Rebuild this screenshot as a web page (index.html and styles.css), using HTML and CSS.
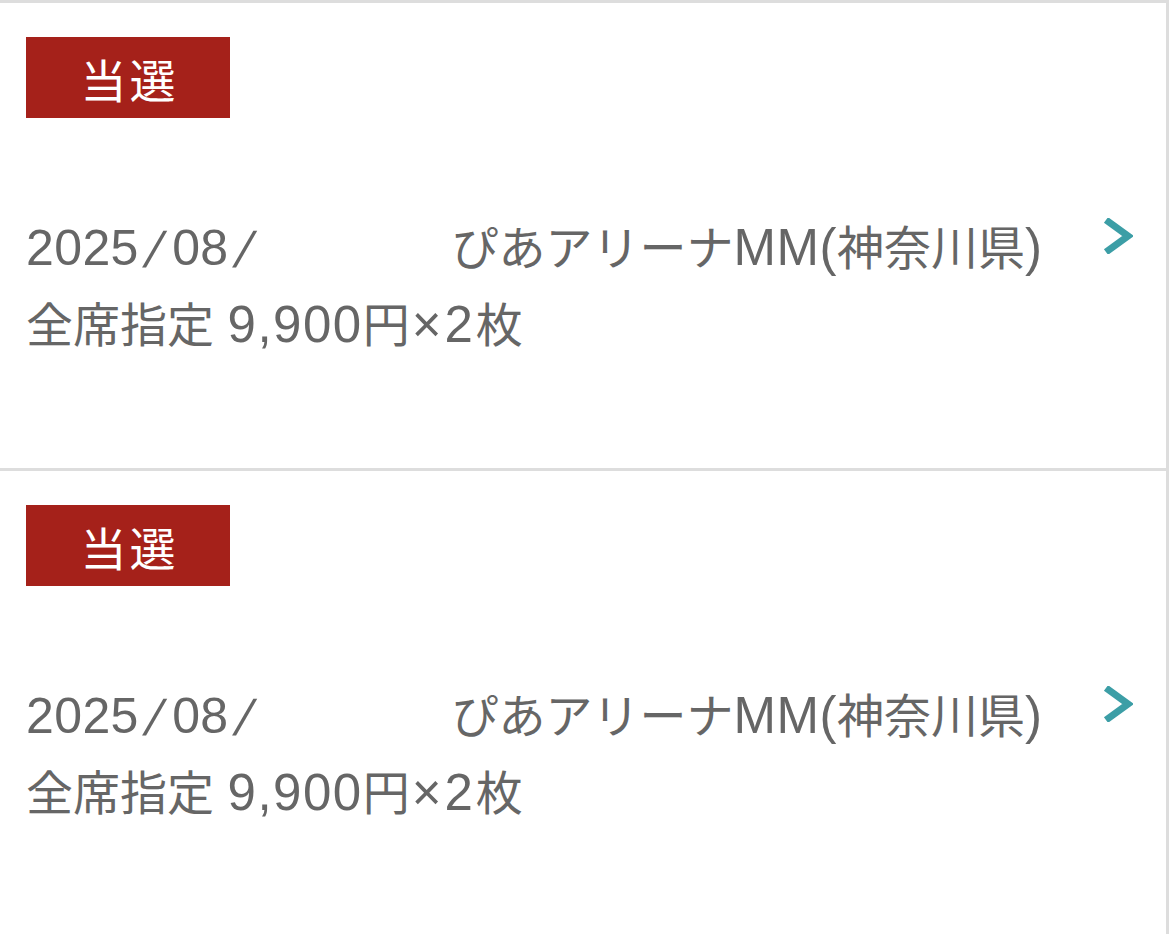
FILE: index.html
```html
<!DOCTYPE html>
<html lang="ja">
<head>
  <meta charset="UTF-8">
  <meta name="viewport" content="width=device-width, initial-scale=1.0">
  <title>抽選結果</title>
  <link rel="stylesheet" href="styles.css">
</head>
<body>
  <div class="result-list">

    <div class="result-item">
      <div class="badge">当選</div>
      <div class="detail">
        <div class="detail-text">
          <div class="line">
            <span class="date lat">2025<span class="sep">/</span>08<span class="sep">/</span></span>
            <span class="venue">ぴあアリーナ<span class="lat">MM(</span>神奈川県<span class="lat">)</span></span>
          </div>
          <div class="line">全席指定 <span class="lat price">9,900</span>円<span class="lat times">×</span><span class="lat count">2</span>枚</div>
        </div>
        <svg class="chevron" viewBox="0 0 30 36" width="30" height="36">
          <polyline points="3,2 25,18 3,34" />
        </svg>
      </div>
    </div>

    <div class="result-item">
      <div class="badge">当選</div>
      <div class="detail">
        <div class="detail-text">
          <div class="line">
            <span class="date lat">2025<span class="sep">/</span>08<span class="sep">/</span></span>
            <span class="venue">ぴあアリーナ<span class="lat">MM(</span>神奈川県<span class="lat">)</span></span>
          </div>
          <div class="line">全席指定 <span class="lat price">9,900</span>円<span class="lat times">×</span><span class="lat count">2</span>枚</div>
        </div>
        <svg class="chevron" viewBox="0 0 30 36" width="30" height="36">
          <polyline points="3,2 25,18 3,34" />
        </svg>
      </div>
    </div>

  </div>
</body>
</html>
```

FILE: styles.css
```css
/* Base */
body {
  margin: 0;
  padding: 0;
  background-color: #fff;
  font-family: "Liberation Sans", "Noto Sans CJK JP", sans-serif;
  color: #666;
}

/* List wrapper */
.result-list {
  border-top: 3px solid #ddd;
  border-right: 3px solid #ddd;
}

/* One result card */
.result-item {
  min-height: 468px;
  box-sizing: border-box;
  padding: 34px 33px 0 26px;
  border-bottom: 3px solid #ddd;
}

.badge {
  width: 204px;
  height: 81px;
  display: flex;
  justify-content: center;
  align-items: center;
  background-color: #a5211a;
  color: #fff;
  font-family: "Noto Sans CJK JP", sans-serif;
  font-size: 46px;
  letter-spacing: 3px;
  text-indent: 3px;
}

/* Date, venue and seat info */
.detail {
  display: flex;
  align-items: flex-start;
  margin-top: 90px;
}

.detail-text {
  flex: 1;
}

.line {
  font-family: "Noto Sans CJK JP", sans-serif;
  font-size: 47px;
  line-height: 74px;
  white-space: nowrap;
}

.lat {
  font-family: "Liberation Sans", sans-serif;
  font-size: 51px;
  letter-spacing: 0.5px;
}

.date {
  display: inline-block;
  width: 415px;
  font-size: 50px;
  letter-spacing: 0.4px;
}

/* slanted, wide date separator */
.sep {
  display: inline-block;
  margin: 0 10px 0 9px;
  transform: skewX(-17deg) translateY(2px);
}

.price {
  margin-left: 3px;
  letter-spacing: 1.5px;
}

.times {
  margin-left: 2px;
  letter-spacing: 3px;
}

.count {
  letter-spacing: 3px;
}

.chevron {
  margin-top: 10px;
}

.chevron polyline {
  fill: none;
  stroke: #3c9ea6;
  stroke-width: 7;
  stroke-linejoin: miter;
}
```
